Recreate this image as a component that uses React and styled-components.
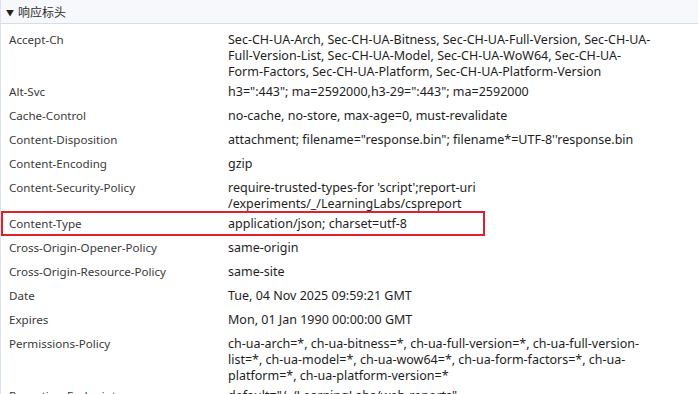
import React from "react";
import styled, { createGlobalStyle } from "styled-components";

const GlobalStyle = createGlobalStyle`
  html, body {
    margin: 0;
    padding: 0;
    background: #ffffff;
  }
  body {
    font-family: "Noto Sans", "Noto Sans CJK SC", sans-serif;
  }
`;

const Panel = styled.div`
  width: 698px;
  height: 394px;
  overflow: hidden;
  border-left: 1px solid #dbe3f0;
  box-sizing: border-box;
`;

const SectionHeader = styled.div`
  display: flex;
  align-items: center;
  height: 23px;
  padding-left: 5px;
  background: #f7f8fb;
  border-bottom: 1px solid #d6dde9;
  font-size: 12px;
  color: #303030;
  font-family: "Noto Sans CJK SC", sans-serif;
`;

const Caret = styled.span`
  font-size: 8px;
  color: #222;
  margin-right: 4px;
  margin-top: 1px;
`;

const List = styled.div`
  padding-top: 4px;
`;

const Row = styled.div`
  position: relative;
  display: grid;
  grid-template-columns: 219px 425px;
  min-height: 24px;
  padding: 4px 0 0 8px;
  box-sizing: border-box;
  line-height: 16px;

  ${(p) =>
    p.$highlight &&
    `
    &::after {
      content: "";
      position: absolute;
      left: 0;
      top: -1px;
      width: 484px;
      height: 25px;
      border: 2px solid #e0202a;
      box-sizing: border-box;
    }
  `}
`;

const Name = styled.div`
  font-size: 11.6px;
  color: #3a3a3a;
`;

const Value = styled.div`
  font-size: 12.5px;
  color: #1e1e1e;
`;

const headers = [
  [
    "Accept-Ch",
    "Sec-CH-UA-Arch, Sec-CH-UA-Bitness, Sec-CH-UA-Full-Version, Sec-CH-UA-Full-Version-List, Sec-CH-UA-Model, Sec-CH-UA-WoW64, Sec-CH-UA-Form-Factors, Sec-CH-UA-Platform, Sec-CH-UA-Platform-Version",
  ],
  ["Alt-Svc", 'h3=":443"; ma=2592000,h3-29=":443"; ma=2592000'],
  ["Cache-Control", "no-cache, no-store, max-age=0, must-revalidate"],
  [
    "Content-Disposition",
    "attachment; filename=\"response.bin\"; filename*=UTF-8''response.bin",
  ],
  ["Content-Encoding", "gzip"],
  [
    "Content-Security-Policy",
    "require-trusted-types-for 'script';report-uri /experiments/_/LearningLabs/cspreport",
  ],
  ["Content-Type", "application/json; charset=utf-8", true],
  ["Cross-Origin-Opener-Policy", "same-origin"],
  ["Cross-Origin-Resource-Policy", "same-site"],
  ["Date", "Tue, 04 Nov 2025 09:59:21 GMT"],
  ["Expires", "Mon, 01 Jan 1990 00:00:00 GMT"],
  [
    "Permissions-Policy",
    "ch-ua-arch=*, ch-ua-bitness=*, ch-ua-full-version=*, ch-ua-full-version-list=*, ch-ua-model=*, ch-ua-wow64=*, ch-ua-form-factors=*, ch-ua-platform=*, ch-ua-platform-version=*",
  ],
  ["Reporting-Endpoints", "default=\"/_/LearningLabs/web-reports\""],
];

const App = () => {
  return (
    <>
      <GlobalStyle />
      <Panel>
        <SectionHeader>
          <Caret>▼</Caret>
          响应标头
        </SectionHeader>
        <List>
          {headers.map(([name, value, hl]) => (
            <Row key={name} $highlight={hl}>
              <Name>{name}</Name>
              <Value>{value}</Value>
            </Row>
          ))}
        </List>
      </Panel>
    </>
  );
};

export default App;
